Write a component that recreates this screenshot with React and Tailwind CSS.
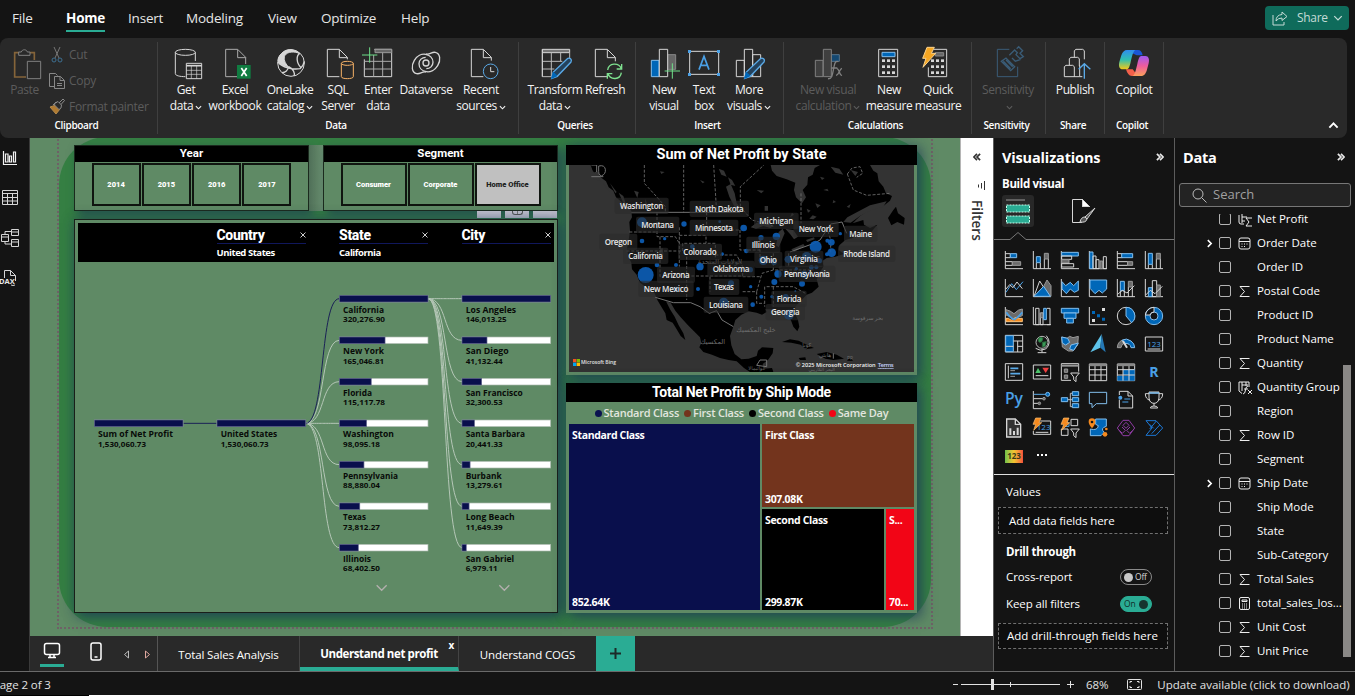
import React from "react";

const W = "#d6d6d6";
const B = "#0067b8";
const LB = "#83beec";
const G = "#6b6b6b";

function Chev({ s = 7, c = "currentColor", w = 1.3, className = "" }) {
  return (
    <svg width={s} height={s} viewBox="0 0 8 8" fill="none" stroke={c} strokeWidth={w} className={className}>
      <path d="M1 2.5 4 5.5 7 2.5" />
    </svg>
  );
}

/* ---------- ribbon ---------- */
function Tool({ vb, w, lines, chev, dim, children }) {
  return (
    <div className="flex flex-col items-center shrink-0" style={{ width: w }}>
      <svg width="32" height="32" viewBox={`${vb} 141 96 96`} fill="none" stroke={W} strokeWidth="3" className={dim ? "overflow-visible opacity-50" : "overflow-visible"}>
        {children}
      </svg>
      <div className={`mt-[3px] flex flex-col items-center text-[12px] leading-4 tracking-[-0.38px] whitespace-nowrap ${dim ? "text-[#5c5c5c]" : "text-[#f4f4f4]"}`}>
        {lines.map((l, i) => (
          <span key={i} className="flex items-center h-4">
            {l}
            {chev && i === lines.length - 1 && <Chev className="ml-[2px] mt-[2px]" />}
          </span>
        ))}
      </div>
    </div>
  );
}

function Group({ w, label, pl = 0, children }) {
  return (
    <div className="flex shrink-0 border-r border-[#3f3f3f] h-[92px] mt-1 flex-col" style={{ width: w }}>
      <div className="flex pt-[5px] h-[75px]" style={{ paddingLeft: pl }}>{children}</div>
      <div className="text-center text-[10px] leading-[16px] font-semibold text-white tracking-[-0.3px] pr-1">{label}</div>
    </div>
  );
}

const Page = ({ x = 0, tail = 28 }) => (
  <path d={`M${x} 148h36l24 24v${tail}M${x} 148v82h36M${x + 36} 149v24h24`} />
);
const Fx = ({ x }) => (
  <g fill={W} stroke="none">
    {[0, 1, 2].map((r) => [0, 1, 2].map((c) => <rect key={`${r}${c}`} x={x + c * 15} y={178 + r * 18} width="9" height="8" />))}
  </g>
);
const SWIRL = "M1278 162c14 2 16-7 28-5 15 3 17 24 7 40-8 13-22 20-34 18-12-2-22-11-22-24 0-11 9-19 20-19";

function Ribbon() {
  return (
    <div className="flex w-[1347px] h-[100px] bg-[#292929] rounded-lg shrink-0">
      <Group w={158} label="Clipboard">
        <div className="flex">
          <Tool vb={27} w={49} lines={["Paste"]} dim>
            <path d="M57 158H44V231H78" stroke="#e0a04a" strokeWidth="5" />
            <path d="M90 158h13v22" stroke="#e0a04a" strokeWidth="5" />
            <path d="M56 166v-10h8c2-9 16-9 18 0h8v10z" />
            <path d="M82 184h40v52H82z" fill="#292929" />
          </Tool>
          <div className="flex flex-col text-[12px] text-[#5c5c5c] tracking-[-0.3px] whitespace-nowrap gap-[10px]">
            <div className="flex items-center gap-1 h-4">
              <svg width="16" height="16" viewBox="0 0 16 16" fill="none" stroke="#777"><path d="M5 0l5 11M11 0L6 11" /><circle cx="5" cy="13" r="2" stroke="#3d6f91" /><circle cx="11" cy="13" r="2" stroke="#3d6f91" /></svg>
              Cut
            </div>
            <div className="flex items-center gap-1 h-4">
              <svg width="16" height="16" viewBox="0 0 16 16" fill="none" stroke="#888"><path d="M5 13.5H.5V.5h6l2 2M5.5 3.500h6l4 4v8h-10zM11 3.500v4h4M8 10.500h5M8 12.500h5" /></svg>
              Copy
            </div>
            <div className="flex items-center gap-1 h-4">
              <svg width="16" height="16" viewBox="0 0 16 16" fill="none" stroke="#888"><path d="M1 8l6-2 4 4-4 5z" fill="#b07a30" stroke="#b58a4c" /><path d="M4 6l3-3 1 1M6 4l3-1.500L12.500 6 12 9 10 10.500 5.500 6zM10 4l4-4 1.500 1.500-3.500 4" fill="#292929" /></svg>
              Format painter
            </div>
          </div>
        </div>
      </Group>
      <Group w={361} label="Data" pl={6}>
        <Tool vb={510} w={44} lines={["Get", "data"]} chev>
          <ellipse cx="556" cy="157" rx="30" ry="9" />
          <path d="M526 157v64c0 6 14 9 30 9M586 157v26" />
          <path d="M559 190h46v46h-46z" fill="#292929" /><path d="M559 197h46" strokeWidth="5" /><path d="M559 211h46M559 223h46M574 197v39M590 197v39" strokeWidth="2" />
        </Tool>
        <Tool vb={657} w={54} lines={["Excel", "workbook"]}>
          <g stroke="#aaa"><Page x={677} tail={20} /></g>
          <rect x="711" y="195" width="41" height="41" fill="#107c41" stroke="none" />
          <path d="M724 204l16 24M740 204l-16 24" stroke="#fff" strokeWidth="5" />
        </Tool>
        <Tool vb={822} w={56} lines={["OneLake", "catalog"]} chev>
          <circle cx="873" cy="189" r="40" />
          <path d="M845 160c12-14 36-16 52 0-14-6-34-6-42 6-6 10 0 24 10 34-14-2-26-8-31-18 0-8 4-16 11-22z" fill={W} />
          <path d="M834 186c12 16 44 24 66 20 6-6 12-14 13-22M866 200c14 6 20 20 16 28M846 218c10 0 18-8 20-18M900 160c-12 6-12 28 4 44" strokeWidth="4" />
        </Tool>
        <Tool vb={966} w={40} lines={["SQL", "Server"]}>
          <Page x={982} tail={6} />
          <path d="M1024 190v40c0 8 36 8 36 0v-40" fill="#292929" stroke="#f7b267" /><ellipse cx="1042" cy="190" rx="18" ry="6" stroke="#f7b267" fill="#292929" />
        </Tool>
        <Tool vb={1086} w={40} lines={["Enter", "data"]}>
          <path d="M1093 178v52h82v-82h-52" /><path d="M1125 148h50v10h-50z" fill="#666" stroke="#999" />
          <path d="M1093 184h82M1093 207h82M1121 165v65M1148 158v72" stroke="#aaa" /><path d="M1109 142v46M1086 165h46" stroke="#6fe08a" />
        </Tool>
        <Tool vb={1230} w={56} lines={["Dataverse"]}>
          <g strokeWidth="4"><path d={SWIRL} /><path d={SWIRL} transform="rotate(180 1278 189)" /><circle cx="1278" cy="189" r="9" /></g>
        </Tool>
        <Tool vb={75} w={54} lines={["Recent", "sources"]} chev>
          <Page x={94} tail={10} /><circle cx="152" cy="214" r="22" stroke="#5aa9e6" fill="#292929" /><path d="M152 201v14h11" />
        </Tool>
      </Group>
      <Group w={117} label="Queries" pl={8}>
        <Tool vb={297} w={56} lines={["Transform", "data"]} chev>
          <path d="M307 148h82v10h-82z" fill="#777" /><path d="M389 158v22M307 158v72h28M307 184h60M307 207h36M334 158v72M362 158v26" stroke="#bbb" />
          <path d="M307 148v82" /><path d="M335 235l5-19 42-40c7-5 15 3 11 10l-41 43z" fill="#24425c" stroke="#5aa9e6" strokeWidth="4" /><path d="M335 235l5-18 11 10z" fill={B} stroke={B} />
        </Tool>
        <Tool vb={447} w={44} lines={["Refresh"]}>
          <Page x={466} tail={12} />
          <path d="M503 210c3-22 33-24 41-4M544 218c-3 22-33 24-41 2M545 192v15h-15M502 236v-15h15" stroke="#7ee08f" strokeWidth="4" fill="none" />
        </Tool>
      </Group>
      <Group w={148} label="Insert" pl={7}>
        <Tool vb={624} w={42} lines={["New", "visual"]}>
          <path d="M634 181h23v49h-23z" fill={B} stroke={LB} /><path d="M683 164h24v44h-24z" fill="#666" stroke="#888" /><path d="M658 148h25v82h-25z" fill="#292929" /><path d="M697 190v46M674 213h46" stroke="#6fe08a" />
        </Tool>
        <Tool vb={744} w={38} lines={["Text", "box"]}>
          <path d="M749 154h87v69h-87z" /><g fill="#4aa0e6" stroke="none"><path d="M744 150h9v9h-9zM831 150h9v9h-9zM744 219h9v9h-9zM831 219h9v9h-9z" /></g>
          <path d="M777 209l15-40 15 40M782 196h20" stroke="#4aa0e6" strokeWidth="5" />
        </Tool>
        <Tool vb={879} w={52} lines={["More", "visuals"]} chev>
          <path d="M889 181h24v49h-24zM913 148h25v82h-25zM938 164h24v66h-24z" />
          <path d="M914 235l5-19 42-40c7-5 15 3 11 10l-41 43z" fill="#24425c" stroke="#5aa9e6" strokeWidth="4" /><path d="M914 235l5-18 11 10z" fill={B} stroke={B} />
        </Tool>
      </Group>
      <Group w={188} label="Calculations" pl={8}>
        <Tool vb={1116} w={72} lines={["New visual", "calculation"]} chev dim>
          <path d="M1126 181h23v49h-23z" fill="#555" /><path d="M1174 164h24v20h-24z" fill={B} stroke={LB} /><path d="M1150 148h24v82h-24z" fill="#555" />
          <path d="M1164 236c14 2 14-18 18-36 3-14 6-18 13-15M1174 204h18M1190 206c8-2 8 22 16 20M1206 205c-8 2-8 20-18 21" strokeWidth="4" />
        </Tool>
        <Tool vb={-21} w={50} lines={["New", "measure"]}>
          <path d="M-4 148h57v82H-4z" /><path d="M6 157h39v13H6z" fill={B} stroke={LB} /><Fx x={6} />
        </Tool>
        <Tool vb={126} w={48} lines={["Quick", "measure"]}>
          <path d="M161 148h39v82h-55v-28" /><path d="M166 158h25v10h-25z" fill="#666" stroke="#888" /><Fx x={153} />
          <path d="M141 142h22l-9 18h13l-38 42 9-27h-10z" fill="#f5a623" stroke="#fbd38d" />
        </Tool>
      </Group>
      <Group w={74} label="Sensitivity">
        <Tool vb={336} w={72} lines={["Sensitivity", ""]} chev dim>
          <g stroke="#4b8fc4"><path d="M388 148h-36v82h61v-30" /><path d="M364 184l14-10 26 26-12 12zM370 184l22 22M378 180l20 20M388 166l16-16 8 8-4 6 12 12 10-6-10-10 8-8-12-12-6 6M396 174l10 10 16-6" strokeWidth="4" /></g>
        </Tool>
      </Group>
      <Group w={59} label="Share">
        <Tool vb={537} w={58} lines={["Publish"]}>
          <path d="M599 196v34h-46v-30l5-4h20l5 4v30M568 196v-20l5-4h20l5 4v22M583 172v-20l5-4h20l5 4v26M599 230h8" />
          <path d="M613 236v-44M596 208l17-17 18 17" stroke="#5aa9e6" strokeWidth="4" />
        </Tool>
      </Group>
      <Group w={59} label="Copilot">
        <Tool vb={714} w={58} lines={["Copilot"]}>
          <defs>
            <linearGradient id="cpa" x1="0" y1="0" x2="0" y2="1"><stop offset="0" stopColor="#2f8cf0" /><stop offset=".5" stopColor="#2fc0b0" /><stop offset="1" stopColor="#f6c915" /></linearGradient>
            <linearGradient id="cpb" x1="0" y1="0" x2="0" y2="1"><stop offset="0" stopColor="#a05af0" /><stop offset=".5" stopColor="#ee5c9c" /><stop offset="1" stopColor="#f9a05a" /></linearGradient>
          </defs>
          <g stroke="none">
            <path d="M736 150h38c8 0 12 6 14 16h-18z" fill="#1a56d6" />
            <path d="M738 208h20l16 20h-18c-10 0-14-8-18-20z" fill="#f2604a" />
            <path d="M742 150h24c-8 6-10 20-14 36-3 14-6 22-12 22h-12c-10 0-13-10-10-22l6-20c4-10 8-16 18-16z" fill="url(#cpa)" />
            <path d="M782 228h-24c8-6 10-20 14-36 3-14 6-24 12-24h12c10 0 13 10 10 22l-6 22c-4 10-8 16-18 16z" fill="url(#cpb)" />
          </g>
        </Tool>
      </Group>
      <div className="flex-1 flex justify-end items-end pr-2 pb-[7px]">
        <Chev s={11} w={1.4} className="rotate-180 text-white" />
      </div>
    </div>
  );
}

/* ---------- report canvas ---------- */
function Slicer({ title, items, w, gap, sel }) {
  return (
    <div className="flex w-[235px] h-[66px] flex-col border border-[#1b2a1e] bg-[#5f8a65] shadow-[4px_4px_9px_rgba(30,58,88,0.65)]">
      <div className="flex h-4 items-center justify-center bg-black font-[Roboto] text-[11.5px] font-bold text-white">{title}</div>
      <div className="flex justify-center pt-[1px]" style={{ gap }}>
        {items.map((t) => (
          <div key={t} style={{ width: w }} className={`flex h-[43px] items-center justify-center border-2 border-[#101510] font-[Roboto] text-[7.5px] font-black ${t === sel ? "bg-[#c0c0c0] text-[#222]" : "text-white"}`}>{t}</div>
        ))}
      </div>
    </div>
  );
}

const STATES = [["California", "320,276.90", 41, 42], ["New York", "165,046.81", 41, 41], ["Florida", "115,117.78", 29, 42], ["Washington", "98,095.18", 51, 37], ["Pennsylvania", "88,880.04", 55, 37], ["Texas", "73,812.27", 23, 37], ["Illinois", "68,402.50", 28, 37]];
const CITIES = [["Los Angeles", "146,013.25", 50.5, 41], ["San Diego", "41,132.44", 43, 37], ["San Francisco", "32,300.53", 57, 37], ["Santa Barbara", "20,441.33", 59.5, 37], ["Burbank", "13,279.61", 36, 37], ["Long Beach", "11,649.39", 49, 37], ["San Gabriel", "6,979.11", 48.5, 32]];
const num = (s) => parseFloat(s.replace(/,/g, ""));

function Node({ x, y, f, name, value, tw, vw }) {
  return (
    <g>
      <rect x={x} y={y - 10} width="266" height="20" fill="#fff" stroke="#a9b8ab" strokeWidth="2" />
      <rect x={x} y={y - 10} width={266 * f} height="20" fill="#090f4c" stroke="#5b6186" strokeWidth="2" />
      <text x={x + 11} y={y + 42} fontSize="26.500" fontWeight="700" textLength={tw * 3} lengthAdjust="spacingAndGlyphs">{name}</text>
      <text x={x + 11} y={y + 70} fontSize="23.500" fontWeight="700" textLength={vw * 3} lengthAdjust="spacingAndGlyphs">{value}</text>
    </g>
  );
}

function Tree() {
  const ys = [56, 181, 305, 430, 554, 679, 803];
  const curve = (x1, y1, x2, y2) => `M${x1} ${y1}C${x1 + 60} ${y1} ${x1 + 42} ${y2} ${x2} ${y2}`;
  return (
    <svg width="482" height="350" viewBox="45 -54 1446 1050" className="block" fontFamily="'Open Sans', sans-serif" fill="#080b08">
      <g fill="none" strokeWidth="3">
        <path d="M370 430H470" stroke="#1a2156" />
        {ys.slice(1).map((y) => <path key={y} d={curve(737, 430, 838, y)} stroke="#b5c7b7" />)}
        <path d={curve(737, 430, 838, 56)} stroke="#1a2156" />
        {ys.map((y) => <path key={y} d={curve(1104, 56, 1206, y)} stroke="#b5c7b7" />)}
      </g>
      <Node x={103} y={430} f={1} name="Sum of Net Profit" value="1,530,060.73" tw={75} vw={48} />
      <Node x={471} y={430} f={1} name="United States" value="1,530,060.73" tw={56.5} vw={48} />
      {STATES.map(([n, v, a, b], i) => <Node key={n} x={838} y={ys[i]} f={num(v) / 320276.9} name={n} value={v} tw={a} vw={b} />)}
      {CITIES.map(([n, v, a, b], i) => <Node key={n} x={1206} y={ys[i]} f={num(v) / 146013.25} name={n} value={v} tw={a} vw={b} />)}
      <path d="M950 916l15 15 15-15M1318 916l15 15 15-15" fill="none" stroke="#b3b0ae" strokeWidth="4" />
    </svg>
  );
}

function TreeHead({ title, value }) {
  return (
    <div className="flex w-[89px] flex-col">
      <div className="flex h-[17px] items-center justify-between border-b border-[#10175c]">
        <span className="font-[Roboto] text-[14px] font-extrabold leading-4 text-white tracking-[-0.3px]">{title}</span>
        <svg width="6" height="6" viewBox="0 0 6 6" stroke="#ccc" strokeWidth="1"><path d="M.5.5l5 5M5.500.5l-5 5" /></svg>
      </div>
      <span className="mt-[1px] text-[9.5px] font-bold leading-4 text-white tracking-[-0.45px] whitespace-nowrap">{value}</span>
    </div>
  );
}

const LABELS = [
  ["Washington", 245, 199, 130], ["Montana", 293, 256, 98], ["North Dakota", 478, 208, 146], ["Minnesota", 462, 265, 114],
  ["Michigan", 649, 244, 102], ["New York", 768, 268, 104], ["Maine", 902, 283, 68], ["Oregon", 175, 307, 82],
  ["Rhode Island", 920, 343, 140], ["Illinois", 610, 316, 70], ["Colorado", 420, 337, 100], ["California", 257, 349, 104],
  ["Ohio", 625, 361, 52], ["Virginia", 732, 358, 84], ["Oklahoma", 513, 388, 110], ["Pennsylvania", 741, 403, 138],
  ["Arizona", 348, 406, 82], ["New Mexico", 318, 448, 134], ["Texas", 492, 442, 60], ["Florida", 687, 478, 74],
  ["Louisiana", 498, 496, 102], ["Georgia", 676, 518, 86],
];
const DOTS = [
  [246, 247, 15], [372, 252, 8], [479, 245, 4], [551, 264, 10], [246, 303, 7], [314, 296, 5], [397, 320, 7], [487, 342, 5], [603, 293, 8], [649, 289, 11],
  [559, 333, 7], [291, 375, 7], [348, 375, 6], [257, 405, 24], [420, 380, 11], [571, 389, 8], [610, 361, 14], [642, 366, 9], [685, 358, 11], [740, 350, 14],
  [778, 362, 8], [767, 320, 18], [802, 302, 6], [814, 307, 10], [841, 281, 5], [815, 338, 13], [801, 343, 6], [732, 403, 11], [709, 386, 5], [754, 382, 7], [769, 382, 6],
  [654, 402, 11], [643, 426, 9], [726, 431, 9], [348, 448, 8], [414, 447, 6], [513, 430, 9], [572, 440, 5], [491, 487, 14], [578, 494, 7], [604, 470, 6], [636, 470, 5], [677, 471, 9], [706, 454, 3], [687, 524, 15],
];

function UsMap() {
  return (
    <svg width="345" height="207" viewBox="27 75 1035 621" className="block" fontFamily="'Open Sans', 'DejaVu Sans', sans-serif">
      <rect x="27" y="75" width="1035" height="621" fill="#333" />
      <path fill="#000" d="M92 75 100 98 112 94 122 112 138 124 146 142 160 152 168 172 182 184 200 200 214 212 216 232 208 246 210 272 206 300 201 326 206 352 214 368 216 388 230 404 240 428 262 444 284 460 292 480 304 500 316 520 320 540 338 548 350 568 362 588 376 600 370 580 356 556 344 530 330 508 318 484 332 488 346 512 362 532 384 556 402 574 420 592 424 608 418 622 430 636 456 644 480 654 506 660 530 664 552 684 570 696 640 696 636 684 612 686 608 672 624 660 638 640 640 624 606 622 594 632 590 648 566 656 544 658 524 642 514 616 510 588 520 560 526 540 544 524 566 514 590 518 606 524 620 516 616 508 644 508 668 514 684 526 694 544 700 560 712 574 718 560 714 540 704 518 706 500 722 482 740 464 756 458 776 440 770 418 780 396 790 380 788 362 800 354 826 350 852 342 836 330 838 316 856 300 878 294 896 280 908 290 934 276 952 254 930 264 912 254 910 240 878 250 900 228 930 208 970 198 990 182 996 168 978 160 970 140 956 124 952 100 940 92 930 75 780 75 764 84 758 104 744 112 742 134 728 150 738 172 726 190 708 172 702 150 706 128 680 118 650 108 636 92 632 75Z" />
      <path fill="#000" d="M984 234 1000 210 1008 200 1014 220 1034 234 1032 254 1012 246 994 256ZM666 606 690 598 716 602 740 614 762 624 738 628 722 614 694 608ZM770 642 800 636 830 644 852 656 820 660 796 656ZM716 654 736 652 738 660 720 660ZM862 656h16v6h-16Z" />
      <g fill="#333">
        <path d="M572 262 590 248 616 246 640 258 632 264 610 258 588 266ZM656 276 668 266 674 280 664 304 656 322 648 316 652 296ZM676 266 700 270 714 290 702 298 692 284ZM694 328 730 312 734 318 702 336ZM738 300 762 292 764 298 742 306Z" />
        <path d="M498 140 512 132 524 160 530 190 540 200 530 214 518 190 508 170ZM476 86l16 6 8 18-16-6ZM504 112l12 8 10 18-14-4ZM420 120l14 6-6 4ZM300 94l14 2-10 6ZM222 152l14 4-4 18ZM256 176l6 18-6 4ZM590 150l22 2-8 8ZM766 190l16 6-10 8ZM748 236l10-10 12 4-10 8ZM690 232l6-14 6 6ZM614 198h10v14h-10ZM812 80l26 6 12 18-24-6ZM872 90l22 6-8 12ZM790 150l12-4 4 8ZM300 326l8-2 2 20-8-2ZM780 110l14 4-8 6ZM820 180l8 6-10 4ZM860 200l12-8-4 12ZM740 206l12 6-8 6Z" />
        <path d="M862 232 930 196 980 184 970 200 930 212 900 228 872 248 850 246ZM96 90l18 20 8 14-22-8ZM130 130l22 22-6 2ZM190 176l16 32-8-4ZM150 130l20 26-4 4ZM176 158l14 10 8 26-8-6Z" />
      </g>
      <g fill="none" stroke="#747474" strokeWidth="2.500" strokeDasharray="9 5">
        <path d="M253 75V130L288 168 316 200V217M371 75V217M461 75 470 217M541 200V140L612 75M723 160V250M291 217V290H346L358 310M358 262V380M358 286H438V310M440 217V270H540M200 333H368V310H466V355M300 290V410H330M380 350V480M380 408H548V380M450 410V455M466 345H530L548 380M548 455H590V490H614M590 455 606 400 640 390H760M614 440V500M640 440V500M620 440H700L740 462M548 410H600M540 270V330H600M600 300V360M640 340V390M686 340V380M700 350H780M208 276H290M800 260 812 300V340M540 200 576 240 640 258M862 102 880 150 920 166 990 160M862 102 876 84 900 80 908 100 890 112" />
      </g>
      <g fill="none" stroke="#747474" strokeWidth="3"><path d="M214 217H540M286 472 340 488H392L420 500 448 520 470 512 486 540 520 560M690 336 762 310 780 300 812 252 846 246 860 280M94 75H110V96M116 78q18-4 20 10 2 14-12 20-10-4-8-14zM94 110H130M600 660H620V680L590 676ZM820 640V656" /></g>
      <g fill="#6e6e6e" fontSize="20" textAnchor="middle">
        <text x="480" y="371">الولايات المتحدة</text><text x="588" y="576">خليج المكسيك</text><text x="458" y="613">المكسيك</text><text x="923" y="541" fontSize="17">بحر سرقوسة</text>
        <text x="740" y="620" fontSize="17">كوبا</text><text x="795" y="651" fontSize="17">هايتي</text><text x="870" y="659" fontSize="15">PR</text><text x="785" y="692" fontSize="14">البحر الكاريبي</text><text x="590" y="690" fontSize="15">غواتيمالا</text>
      </g>
      {DOTS.map(([x, y, r], i) => <circle key={i} cx={x} cy={y} r={r} fill="#0d5cb4" fillOpacity=".93" />)}
      {LABELS.map(([t, x, y, w]) => (
        <g key={t}>
          <rect x={x - w / 2 - 16} y={y - 26} width={w + 32} height="49" rx="6" fill="#2b2b2b" fillOpacity=".6" />
          <text x={x - w / 2} y={y + 8} fontSize="24" fontWeight="600" fill="#e8e8e8" textLength={w}>{t}</text>
        </g>
      ))}
      <path fill="#f25022" d="M39 657h10v10H39z" /><path fill="#7fba00" d="M50 657h10v10H50z" /><path fill="#00a4ef" d="M39 668h10v10H39z" /><path fill="#ffb900" d="M50 668h10v10H50z" />
      <text x="63" y="673" fontSize="18" fontWeight="600" fill="#e4e4e4" textLength="105" lengthAdjust="spacingAndGlyphs">Microsoft Bing</text>
      <text x="707" y="681" fontSize="18" fontWeight="600" fill="#f2f2f2" textLength="240" lengthAdjust="spacingAndGlyphs">© 2025 Microsoft Corporation</text>
      <text x="953" y="681" fontSize="18" fontWeight="600" fill="#c4d0ff" textLength="48" textDecoration="underline">Terms</text>
    </svg>
  );
}

function Cell({ name, value, className }) {
  return (
    <div className={`flex flex-col justify-between overflow-hidden px-[3px] pt-[4px] pb-[1px] text-[10.5px] leading-[14px] font-bold text-white whitespace-nowrap tracking-[-0.35px] ${className}`}>
      <span>{name}</span><span>{value}</span>
    </div>
  );
}

function Canvas() {
  const panel = "bg-[#5f8a65] shadow-[4px_4px_12px_rgba(30,58,88,0.7),0_0_12px_rgba(30,58,88,0.4)]";
  return (
    <div className="flex h-[498px] w-[930px] shrink-0 overflow-hidden bg-[#5f8a65] pl-[27px]">
      <div className="-mt-1 flex h-[495px] w-[876px] border-2 border-dotted border-[#6e6166] pt-[1px]">
        <div className="flex h-[490px] w-[872px] gap-2 rounded-[48px] bg-[#357f43] pl-[15px] pt-[8px]">
          <div className="flex w-[484px] flex-col">
            <div className="flex">
              <Slicer title="Year" items={["2014", "2015", "2016", "2017"]} w={49} gap={1.3} />
              <div className="h-[66px] w-[14px] bg-linear-to-r from-[#4f6f58] to-[#6a906f]" />
              <Slicer title="Segment" items={["Consumer", "Corporate", "Home Office"]} w={66} gap={1} sel="Home Office" />
            </div>
            <div className="flex h-2 justify-end gap-1 pr-[1px]">
              <div className="h-[7px] w-6 bg-[#c3c1cf]" />
              <div className="flex h-[7px] w-6 justify-center bg-[#c3c1cf]"><div className="h-[4px] w-[11px] rounded-b-[3px] border border-t-0 border-[#555] flex justify-center"><div className="w-px bg-[#777]" /></div></div>
              <div className="h-[7px] w-6 bg-[#c3c1cf]" />
            </div>
            <div className={`flex h-[394px] flex-col border border-[#1a1f1a] ${panel}`}>
              <div className="mx-[3px] mt-[3px] flex h-[39px] gap-[33.500px] bg-black pl-[138.500px] pt-1">
                <TreeHead title="Country" value="United States" />
                <TreeHead title="State" value="California" />
                <TreeHead title="City" value="" />
              </div>
              <Tree />
            </div>
          </div>
          <div className="flex w-[351px] flex-col gap-2">
            <div className={`flex h-[230px] flex-col items-center ${panel}`}>
              <div className="flex h-5 w-full items-center justify-center bg-black font-[Roboto] text-[14.500px] font-bold text-white">Sum of Net Profit by State</div>
              <UsMap />
            </div>
            <div className={`flex h-[230px] flex-col ${panel}`}>
              <div className="flex h-[19px] w-full items-center justify-center bg-black font-[Roboto] text-[14px] font-bold text-white tracking-[-0.2px]">Total Net Profit by Ship Mode</div>
              <div className="flex h-[22px] items-center justify-center gap-[5px] text-[11px] font-semibold text-[#e2e6df] tracking-[-0.22px] whitespace-nowrap">
                {[["Standard Class", "#0a1250"], ["First Class", "#73341d"], ["Second Class", "#000"], ["Same Day", "#f20516"]].map(([t, c]) => (
                  <span key={t} className="flex items-center gap-[2px]"><i className="h-[7px] w-[7px] rounded-full" style={{ background: c }} />{t}</span>
                ))}
              </div>
              <div className="ml-[3px] flex h-[186px] gap-[2px]">
                <Cell name="Standard Class" value="852.64K" className="w-[191px] bg-[#090f4c]" />
                <div className="flex flex-col gap-[2px]">
                  <Cell name="First Class" value="307.08K" className="h-[83px] w-[152px] bg-[#73341d]" />
                  <div className="flex flex-1 gap-[2px]">
                    <Cell name="Second Class" value="299.87K" className="w-[122px] bg-black" />
                    <Cell name="S..." value="70..." className="w-[28px] bg-[#f20516]" />
                  </div>
                </div>
              </div>
            </div>
          </div>
        </div>
      </div>
    </div>
  );
}

/* ---------- visual gallery icons, 54-unit grid ---------- */
const AX = <path d="M1 0V53H54" />;
const bl = { fill: B, stroke: LB };
const gr = { fill: G, stroke: "#999" };
const bolt = <path d="M8-3h16l-6 14h8L2 34l6-18H0z" fill="#f58a1f" stroke="#fbc27a" strokeWidth="2" />;
const VIS = [
  <>{AX}<path d="M1 8h15v12H1M1 32h21v11H1" /><path d="M16 8h19v12H16z" {...bl} /><path d="M22 32h25v11H22z" {...gr} /></>,
  <>{AX}<path d="M10 35v18M22 35v18M34 24v29M46 24v29" /><path d="M10 17h12v18H10z" {...bl} /><path d="M34 7h12v17H34z" {...gr} /></>,
  <>{AX}<path d="M2 4h50v11H2z" {...bl} /><path d="M2 15h30v10H2z" /><path d="M2 26h22v10H2z" {...gr} /><path d="M2 38h36v10H2z" /></>,
  <>{AX}<path d="M2 3h10v50H2z" {...bl} /><path d="M12 15h9v38h-9zM21 26h9v27h-9z" /><path d="M33 30h8v23h-8z" {...gr} /><path d="M43 17h9v36h-9z" /></>,
  <>{AX}<path d="M1 8h15v12H1M1 32h31v11H1" /><path d="M14 8h33v12H14z" {...bl} /><path d="M32 32h15v11H32z" {...gr} /></>,
  <>{AX}<path d="M10 40v13M22 40v13M34 24v29M46 24v29" /><path d="M10 7h12v33H10z" {...bl} /><path d="M34 7h12v17H34z" {...gr} /></>,
  <>{AX}<path d="M3 40 20 14 34 32 54 8" stroke="#4aa0e6" /><path d="M3 30 14 17l10 9 12-17 16 20" /></>,
  <>{AX}<path d="M30 26 42 3 54 20v32H34z" {...gr} /><path d="M3 52 20 6l14 22-14 24z" fill="#141414" /><path d="M3 52 32 22 52 52z" {...bl} /></>,
  <>{AX}<path d="M3 8 14 20 28 10 38 20 52 6V34L40 40 28 30 16 44 3 30z" {...bl} /></>,
  <>{AX}<path d="M3 3h50v27L40 42 30 34 18 44 3 28z" {...bl} /></>,
  <>{AX}<path d="M10 35v18M22 35v18M34 24v29M46 24v29" /><path d="M10 7h12v28H10z" {...bl} /><path d="M34 7h12v17H34z" {...gr} /><path d="M2 46 16 34 30 42 52 20" /></>,
  <>{AX}<path d="M10 26h12v27H10z" {...bl} /><path d="M22 5h13v48H22z" /><path d="M35 18h11v35H35z" {...gr} /><path d="M2 48 16 34 30 44 52 22" /></>,
  <>{AX}<path d="M3 8q12 2 24 12 14-14 25-14V26q-12 2-24 14Q14 26 3 24z" {...gr} /><path d="M3 34h8q8 10 16 0 10-6 14 0h11v10H3z" fill="#f58a1f" stroke="#fbc27a" /><path d="M4 16q12 18 24 22 10-6 24-22" stroke="#4aa0e6" strokeWidth="5" /></>,
  <>{AX}<path d="M8 4h10v49H8zM22 18h8v35h-8zM42 4h9v49h-9" /><path d="M22 18h8v14h-8z" {...gr} /><path d="M32 4h8v34h-8z" {...bl} /></>,
  <g {...bl}><path d="M1 4h52v14H1z" /><path d="M9 18h36v16H9z" /><path d="M17 34h20v14H17z" /></g>,
  <>{AX}<g stroke="none" fill={B}><path d="M9 12h9v9H9zM24 22h9v9h-9zM39 32h9v9h-9z" /><path fill="#ddd" d="M39 3h9v9h-9zM9 36h9v9H9z" /></g></>,
  <><circle cx="27" cy="27" r="26" /><path d="M27 1A26 26 0 0 1 44 47L27 27z" {...bl} /></>,
  <><circle cx="27" cy="27" r="19" stroke={B} strokeWidth="13" /><circle cx="27" cy="27" r="26" stroke={LB} /><circle cx="27" cy="27" r="12" stroke={LB} /><path d="M27 8A19 19 0 0 0 9 24" stroke="#141414" strokeWidth="12" /><path d="M27 1A26 26 0 0 0 1 24H15A12 12 0 0 1 27 15z" /></>,
  <><path d="M1 1h52v50H1z" /><path d="M2 2h23v48H2z" {...bl} /><path d="M25 18h28M38 34h15M38 18v33M2 34h23" /></>,
  <><circle cx="27" cy="22" r="18" strokeWidth="2.500" /><path d="M16 10q8-6 14 0l-4 10q-8 4-10-2zM28 22l12-2-4 14-8 2z" fill="#3b9a57" stroke="#2a6a3c" /><path d="M40 2q18 22-2 40Q20 50 8 40M27 44v8M14 53h26" /></>,
  <><path d="M2 6 18 10 26 4l10 4 16-4-2 26-14 18H22L4 36z" {...gr} /><path d="M2 6l18 4 6 12-12 8-10-6zM30 30l22-6-14 22-12-4z" {...bl} /></>,
  <g stroke="none"><path d="M38-3 4 52 34 38z" fill="#5ec3ea" /><path d="M38-3 34 38 50 52z" fill="#2478b5" /></g>,
  <><path d="M1 38A26 26 0 0 1 16 15l5 10q-8 4-9 13z" {...gr} /><path d="M16 15Q28 8 42 18 53 26 53 38H42Q40 24 22 25z" {...bl} /><path d="M18 18 30 38" strokeWidth="6" /></>,
  <><path d="M1 6h52v42H1z" /><path d="M8 42h38" /><text x="27" y="35" textAnchor="middle" fontSize="24" fill="#4aa0e6" stroke="none" fontWeight="400">123</text></>,
  <><path d="M1 2h52v50H1zM10 8v38" /><path d="M16 16h24M16 32h30" stroke="#5aa9e6" strokeWidth="5" /><path d="M16 23h14M16 40h14" stroke="#999" /></>,
  <><path d="M1 6h52v42H1z" /><path d="M7 30l8-15 9 15z" fill="#4cc26a" stroke="none" /><path d="M28 14h20L38 30z" fill="#f04040" stroke="none" /><path d="M8 38h38" /></>,
  <><path d="M30 52H1V2h52v24" /><path d="M1 8h52" {...gr} strokeWidth="6" /><path d="M10 18h10v10H10zM10 36h10v10H10z" {...gr} /><path d="M29 30h26L45 42v14l-7-6V42z" fill="#141414" /></>,
  <><path d="M1 3h52v50H1zM1 20h52M1 36h52M18 6v47M36 6v47" /><path d="M1 6h52" stroke="#888" strokeWidth="7" /></>,
  <><path d="M1 3h52v50H1z" /><path d="M36 18h17v35H1V38h35zM18 20h18v16H18z" fill={B} stroke="none" /><path d="M1 20h52M1 36h52M18 6v47M36 6v47" /><path d="M1 6h52" stroke="#888" strokeWidth="7" /></>,
  <text x="27" y="42" textAnchor="middle" fontSize="43" fill="#4aa0e6" stroke="none" fontWeight="700" textLength="28" lengthAdjust="spacingAndGlyphs">R</text>,
  <text x="27" y="38" textAnchor="middle" fontSize="46" fill="#4aa0e6" stroke="none" fontWeight="600" textLength="54" lengthAdjust="spacingAndGlyphs">Py</text>,
  <>{AX}<path d="M2 10h36" stroke="#5aa9e6" /><circle cx="44" cy="10" r="6" {...bl} /><path d="M2 23h28M2 37h14" /><circle cx="33" cy="23" r="4" {...gr} /><circle cx="19" cy="37" r="4" {...gr} /></>,
  <><path d="M20 26h14M34 7h-6v40h6" stroke="#bbb" /><g {...bl}><path d="M1 20h19v12H1zM34 2h19v12H34zM34 20h19v12H34zM34 38h19v12H34z" /></g></>,
  <path d="M1 4h52v34H22L9 50V38H1z" stroke={LB} />,
  <><path d="M7 12V1h26l14 14v36H7V26M33 1v14h14" /><circle cx="10" cy="20" r="6" fill="#4aa0e6" stroke="none" /><path d="M22 24h18M16 33h18" stroke="#4aa0e6" /></>,
  <><path d="M12 3h30v18q-2 16-15 16T12 21zM12 8H1q0 16 14 20M42 8h11q0 16-14 20M27 37v8M16 51q0-6 11-6t11 6z" /><path d="M12 6h30" stroke={LB} strokeWidth="5" /></>,
  <><path d="M5 0h26l16 16v38H5zM31 0v16h16" fill="#333" strokeWidth="4" /><path d="M16 28v20M27 36v12M38 26v22" strokeWidth="6" /></>,
  <><path d="M22 6h31v40H1V36" /><path d="M8 40h38" /><text x="32" y="34" textAnchor="middle" fontSize="24" fill="#4aa0e6" stroke="none">123</text>{bolt}</>,
  <><path d="M30 1h20v19H30zM1 30h20v19H1z" /><path d="M16 12h8v10H8" stroke="#5aa9e6" /><path d="M29 30h26L45 42v14l-7-6V42z" fill="#141414" />{bolt}</>,
  <><path d="M20 0h32v22q-20 6-6 18L36 50H4V30q22 6 24-10l-8-4z" fill={B} stroke={LB} /><path d="M-1 8q0-10 10-10t10 10q0 8-10 20Q-1 16-1 8z" fill="#f58a1f" stroke="none" /><circle cx="9" cy="9" r="4" fill="#141414" stroke="none" /><circle cx="48" cy="46" r="7" fill="#f58a1f" stroke="none" /><circle cx="52" cy="30" r="4" fill="#f58a1f" stroke="none" /></>,
  <g stroke="#8e3ba3"><path d="M18 4h18l17 23-17 23H18L1 27z" /><path d="M27 10l9 9-9 9-9-9zM15 24l10 10-9 9-9-9M39 24L29 34l9 9 9-9" /></g>,
  <g stroke="#1c78d6"><path d="M3 5h30l20 22-20 22H3l18-22zM14 16l12 12M34 6 14 30M44 18 20 44" /></g>,
];

function BuildGrid() {
  return (
    <div className="grid grid-cols-[repeat(6,28px)] auto-rows-[28px] pl-[6px] mt-[4px]">
      {VIS.map((v, i) => (
        <div key={i} className="flex items-center justify-center">
          <svg width="18" height="18" viewBox="0 0 54 54" fill="none" stroke={W} strokeWidth="3" className="overflow-visible" fontFamily="'Open Sans', sans-serif">{v}</svg>
        </div>
      ))}
      <div className="flex items-center justify-center"><div className="flex h-[13px] w-[18px] items-center justify-center bg-linear-to-r from-[#6cc04a] via-[#f2c530] to-[#f2503a] text-[8px] font-bold text-[#3a3a1a]">123</div></div>
      <div className="flex items-center justify-center gap-[2px] pb-[2px]">{[0, 1, 2].map((i) => <i key={i} className="h-[2px] w-[2px] bg-white" />)}</div>
    </div>
  );
}

const Dbl = ({ flip, c = "#e8e8e8" }) => (
  <svg width="8" height="8" viewBox="0 0 9 9" fill="none" stroke={c} strokeWidth="1.900" className={flip ? "rotate-180" : ""}><path d="M1 1l3.500 3.500L1 8M4.500 1L8 4.500 4.500 8" /></svg>
);

function Toggle({ on }) {
  return (
    <div className={`flex h-4 w-8 items-center rounded-full border px-[3px] text-[8.500px] leading-none tracking-[-0.2px] ${on ? "border-[#2aac94] bg-[#2aac94] text-[#0f2f29] justify-between" : "border-[#8a8a8a] text-[#d6d6d6] gap-[2px]"}`}>
      {on ? <>On<i className="h-[9px] w-[9px] rounded-full bg-[#16352f]" /></> : <><i className="h-[9px] w-[9px] rounded-full bg-[#c8c8c8]" />Off</>}
    </div>
  );
}

function VisPane() {
  const drop = "flex mx-1 w-[170px] items-center border border-dashed border-[#707070] bg-[#0e0e0e] text-[11.500px] text-white whitespace-nowrap";
  return (
    <div className="flex w-[182px] shrink-0 flex-col border-x border-[#5c5c5c] text-white">
      <div className="flex h-[38px] items-center justify-between pl-2 pr-[10px]">
        <span className="text-[14.500px] font-bold tracking-[-0.15px] pt-px">Visualizations</span><Dbl />
      </div>
      <div className="pl-2 text-[11.500px] font-bold leading-4 tracking-[-0.35px]">Build visual</div>
      <div className="flex h-[46px] pl-2 pt-[3px]">
        <div className="flex h-8 w-8 items-center justify-center rounded-[3px] bg-[#282828]">
          <svg width="24" height="26" viewBox="0 0 24 26" fill="none"><path d="M0 2h19" stroke="#999" /><rect x=".5" y="7" width="23" height="7" fill="#2aac94" stroke="#cfe" strokeDasharray="2 1" /><rect x=".5" y="18" width="23" height="7" fill="#2aac94" stroke="#cfe" strokeDasharray="2 1" /></svg>
        </div>
        <svg width="26" height="26" viewBox="0 0 26 26" fill="none" stroke={W} className="ml-[36px] mt-[3px]"><path d="M12 24.500H2.500v-23h10l6 6M12.500 1.500v7h7z" /><path d="M12.500 1.500l7 7h-7z" fill="#fff" /><path d="M25 10 17 21l-2-2zM15 19q-4 0-5 5 6 1 7-3z" fill="#555" /></svg>
      </div>
      <svg width="180" height="10" viewBox="0 0 180 10" fill="none" stroke="#777" className="-mt-[6px] block shrink-0"><path d="M0 7.500H16L24 0.500l8 7H180" /></svg>
      <BuildGrid />
      <div className="mt-[4px] border-t border-[#e0e0e0]" />
      <div className="h-[32px] pl-3 pt-[9px] text-[11.500px] leading-4 tracking-[-0.1px]">Values</div>
      <div className={`${drop} h-[27px] pl-[10px] tracking-[-0.1px]`}>Add data fields here</div>
      <div className="pl-3 pt-[10px] h-[32px] text-[11.500px] font-bold leading-4 tracking-[-0.3px]">Drill through</div>
      <div className="flex h-[26px] items-center justify-between pl-3 pr-[22px] text-[11.500px] -mt-[2px]"><span className="tracking-[-0.1px]">Cross-report</span><Toggle /></div>
      <div className="flex h-[26px] items-center justify-between pl-3 pr-[22px] text-[11.500px] mt-px"><span className="tracking-[-0.1px]">Keep all filters</span><Toggle on /></div>
      <div className={`${drop} mt-[6px] h-[26px] pl-[8px]`}>Add drill-through fields here</div>
    </div>
  );
}

const FIELDS = [["Net Profit", "hs"], ["Order Date", "cal"], ["Order ID"], ["Postal Code", "sum"], ["Product ID"], ["Product Name"], ["Quantity", "sum"], ["Quantity Group", "grp"], ["Region"], ["Row ID", "sum"], ["Segment"], ["Ship Date", "cal"], ["Ship Mode"], ["State"], ["Sub-Category"], ["Total Sales", "sum"], ["total_sales_los...", "calc"], ["Unit Cost", "sum"], ["Unit Price", "sum"]];
const FI = {
  sum: <path d="M11.500 1.500H2L6.500 6.500 2 11.500h9.500" />,
  cal: <><rect x="1" y="1" width="11" height="11" rx="2" /><path d="M1 4.500h11M3.500 7h1M6 7h1M8.500 7h1M3.500 9.500h1M6 9.500h1" /></>,
  calc: <><rect x="1.500" y=".5" width="10" height="12" rx="1.500" /><path d="M4 3h5v1.500H4zM4 7h1M6 7h1M8 7h1M4 9h1M6 9h1M8 9h1M4 11h1M6 11h1M8 11h1" /></>,
  hs: <><path d="M6 11H3a2 2 0 0 1-2-2V2M4 0v10M4 4h5M4 8h3" /><path d="M14 5H8l3 4-3 4h6" /></>,
  grp: <><path d="M4 12.500 1 10V1h10v5M4 1v9M4 4h6M8 1v4" /><path d="M5 13q2 0 2.500-4T10 5M6 8h4M10 9l4 4M14 9l-4 4" /></>,
};

function DataPane() {
  return (
    <div className="flex w-[180px] shrink-0 flex-col text-white">
      <div className="flex h-[38px] items-center justify-between pl-2 pr-[10px]">
        <span className="text-[14.500px] font-bold tracking-[-0.3px] pt-px">Data</span><Dbl />
      </div>
      <div className="ml-1 mt-[7px] flex h-6 w-[172px] items-center gap-[6px] rounded-[3px] border border-[#777] bg-[#232323] pl-3 text-[13px] text-[#a0a0a0]">
        <svg width="15" height="15" viewBox="0 0 15 15" fill="none" stroke="#bbb"><circle cx="6" cy="6" r="5" /><path d="M9.500 9.500 14.500 14.500" /></svg>
        <span>Search</span>
      </div>
      <div className="mt-[7px] flex h-[448px] overflow-hidden">
        <div className="-mt-[7px] flex w-[168px] flex-col">
          {FIELDS.map(([n, k]) => (
            <div key={n} className="flex h-6 shrink-0 items-center pl-[30px] text-[11.500px] whitespace-nowrap tracking-[-0.05px]">
              <span className="w-[14px]">{k === "cal" && <Chev s={9} w={1.400} className="-rotate-90" />}</span>
              <i className="h-3 w-3 rounded-[2px] border border-[#b5b5b5]" />
              <span className="w-[26px] pl-[7px]">{k && <svg width="14" height="13" viewBox="0 0 14 13" fill="none" stroke="#eee" className="overflow-visible">{FI[k]}</svg>}</span>
              {n}
            </div>
          ))}
        </div>
        <div className="mt-[151px] h-[292px] w-2 bg-[#8a8886]" />
      </div>
    </div>
  );
}

function Rail() {
  return (
    <div className="flex w-[30px] shrink-0 flex-col border-r border-[#3a3a3a] pt-[10px] gap-[20px]">
      <svg width="20" height="20" viewBox="0 0 20 20" fill="none" stroke="#f2f2f2" strokeWidth="1.200"><path d="M3.500 3v13.500H17M5.500 6h2.500v8H5.500zM9.500 8h2v6h-2zM13.500 4h2v10h-2z" /></svg>
      <svg width="20" height="20" viewBox="0 0 20 20" fill="none" stroke="#d6d6d6"><path d="M2.500 2.500h15v14h-15zM2.500 5.500h15M2.500 9.500h15M2.500 13h15M7.500 5.500v11M12.500 5.500v11" /></svg>
      <svg width="20" height="20" viewBox="0 0 20 20" fill="none" stroke="#d6d6d6"><path d="M1.500 6.500h7v7h-7zM1.500 9h7M11.500 1.500h7v6h-7zM11.500 4h7M11.500 11.500h7v7h-7zM11.500 14h7M5 6V3.500h6.500M5 14v2h6.500" /></svg>
      <svg width="20" height="20" viewBox="0 0 20 20" fill="none" stroke="#d6d6d6"><path d="M4.500 10V2.500h6l5 5V13M10.500 2.500v5h5M15 17q-2 1-4 0" /><text x="-1" y="16" fontSize="7.500" fontWeight="700" fill="#e8e8e8" stroke="none">DAX</text></svg>
    </div>
  );
}

function Tabs() {
  return (
    <div className="flex h-[35px] bg-[#292929] text-[11.500px] text-white whitespace-nowrap tracking-[-0.15px]">
      <div className="flex w-[128px] border-r border-[#555] pt-[6px]">
        <div className="ml-[10px] flex w-6 flex-col items-center border-b-[3px] border-[#2aac94] h-[25px]">
          <svg width="18" height="17" viewBox="0 0 18 17" fill="none" stroke="#fff" strokeWidth="1.500"><rect x="1.500" y="1.500" width="15" height="11" rx="2" /><path d="M5 15.500h8M7 13v2M11 13v2" /></svg>
        </div>
        <svg width="12" height="19" viewBox="0 0 12 19" fill="none" stroke="#fff" strokeWidth="1.500" className="ml-[26px]"><rect x="1" y="1" width="10" height="17" rx="2" /><path d="M4.500 15h3" /></svg>
        <svg width="26" height="9" viewBox="0 0 26 9" fill="none" stroke="#bbb" className="ml-[22px] mt-[8px]"><path d="M4.500 1v7L.5 4.500z" /><path d="M21.500 1v7l4-3.500z" stroke="#e0a8a0" /></svg>
      </div>
      <div className="flex w-[142px] items-center justify-center border-r border-[#444] pt-[2px]">Total Sales Analysis</div>
      <div className="relative flex w-[159px] items-center justify-center border-b-4 border-r border-[#2aac94] border-r-[#444] pt-[5px] font-bold tracking-[-0.4px]">Understand net profit<span className="absolute right-[4px] top-[2px] text-[10px] font-bold">x</span></div>
      <div className="flex w-[137px] items-center justify-center pt-[2px]">Understand COGS</div>
      <div className="flex w-[39px] items-center justify-center bg-[#2aac94]"><svg width="11" height="11" viewBox="0 0 11 11" stroke="#1c2b28" strokeWidth="2"><path d="M5.500 0v11M0 5.500h11" /></svg></div>
    </div>
  );
}

const MENU = [["File", 54], ["Home", 62], ["Insert", 58], ["Modeling", 82], ["View", 53], ["Optimize", 80], ["Help", 60]];

export default function App() {
  return (
    <div className="flex h-[696px] w-[1355px] flex-col overflow-hidden bg-[#141414] font-['Open_Sans',sans-serif]">
      <div className="flex h-[38px] shrink-0 items-start justify-between pl-3 pr-[6px] pt-[6px]">
        <div className="flex text-[13.500px] tracking-[-0.2px] text-[#e6e6e6]">
          {MENU.map(([t, w]) => (
            <div key={t} style={{ width: w }}>
              <span className={t === "Home" ? "inline-block h-[26px] border-b-2 border-[#2aac94] font-bold leading-6 text-white" : "inline-block h-[26px] leading-6"}>{t}</span>
            </div>
          ))}
        </div>
        <div className="flex h-6 w-[84px] items-center rounded bg-[#0f6b5b] pl-[7px] text-[12px] tracking-[-0.3px] text-[#c5dbd6]">
          <svg width="16" height="15" viewBox="0 0 16 15" fill="none" stroke="currentColor" className="mr-[9px]"><path d="M1 4v10h11v-3M10 1l5 4.500-5 4V7Q6 7 4 10q0-6 6-6.500z" /></svg>
          Share
          <Chev s={10} w={1} className="ml-[5px]" />
        </div>
      </div>
      <Ribbon />
      <div className="flex h-[533px] shrink-0">
        <Rail />
        <div className="flex w-[963px] shrink-0 flex-col">
          <div className="flex">
            <Canvas />
            <div className="flex h-[498px] w-[33px] flex-col items-center border-l border-[#b5b5b5] bg-white pt-[15px]">
              <Dbl flip c="#333" />
              <svg width="11" height="10" viewBox="0 0 11 10" stroke="#333" className="ml-[6px] mt-[20px]"><path d="M9.500 0v9M6.500 2v5.500M3.500 3.500v3" /></svg>
              <span className="mt-[9px] text-[13.500px] leading-4 font-semibold text-[#333] tracking-[0.1px] [writing-mode:vertical-rl]">Filters</span>
            </div>
          </div>
          <Tabs />
        </div>
        <VisPane />
        <DataPane />
      </div>
      <div className="flex h-[24px] shrink-0 items-center border-t border-[#6a6a6a] pt-[2px] text-[11.500px] text-[#e2e2e2] whitespace-nowrap">
        <span className="-ml-[7px] w-[958px] tracking-[-0.1px]">Page 2 of 3</span>
        <svg width="126" height="12" viewBox="0 0 126 12" stroke="#e2e2e2" fill="none"><path d="M2 5.500h5M10 5.500h99M59.500 3v5M116 5.500h7M119.500 2v7" /><path d="M41.500 0v11" strokeWidth="3" /></svg>
        <span className="ml-[9px] tracking-[-0.1px]">68%</span>
        <svg width="15" height="11" viewBox="0 0 15 11" stroke="#e2e2e2" fill="none" className="ml-[19px]"><rect x=".5" y=".5" width="14" height="10" rx="1" /><path d="M3 4V2.500h2M12 4V2.500h-2M3 7v1.500h2M12 7v1.500h-2" /></svg>
        <span className="ml-[15px]">Update available (click to download)</span>
      </div>
      <div className="flex h-px shrink-0"><div className="w-[89px] bg-black" /><div className="flex-1 bg-white" /></div>
    </div>
  );
}
